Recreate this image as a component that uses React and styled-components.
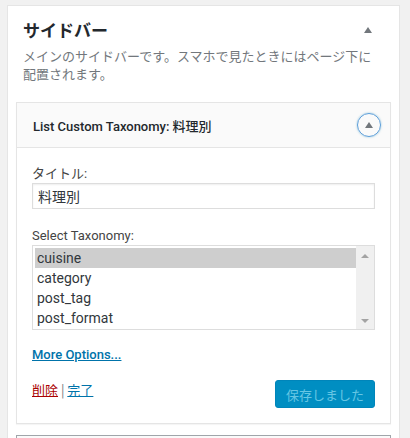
import React from "react";
import styled, { createGlobalStyle } from "styled-components";

const GlobalStyle = createGlobalStyle`
  html, body {
    margin: 0;
    padding: 0;
    background: #f1f1f1;
    overflow: hidden;
  }
  body {
    font-family: Roboto, "Noto Sans CJK JP", sans-serif;
    font-size: 13px;
    color: #444;
  }
`;

const Page = styled.div`
  padding: 5px 10px 0 7px;
  height: 438px;
  box-sizing: border-box;
`;

const Sidebar = styled.div`
  width: 393px;
  box-sizing: border-box;
  background: #fff;
  border: 1px solid #e5e5e5;
  padding: 0 8px;
  height: 460px;
`;

const SidebarHead = styled.div`
  display: flex;
  align-items: center;
  justify-content: space-between;
  padding: 7px 19px 0 7px;
  height: 34px;
  box-sizing: content-box;
`;

const SidebarTitle = styled.h2`
  margin: 0;
  font-family: "Noto Sans CJK JP", sans-serif;
  font-size: 17px;
  font-weight: 700;
  color: #23282d;
  line-height: 34px;
`;

const Arrow = styled.span`
  display: block;
  width: 0;
  height: 0;
  border-left: ${({ w }) => w}px solid transparent;
  border-right: ${({ w }) => w}px solid transparent;
  border-bottom: ${({ h }) => h}px solid ${({ color }) => color};
  ${({ down }) => down && "transform: rotate(180deg);"}
`;

const Description = styled.p`
  margin: 0 0 19px;
  padding: 0 10px 0 7px;
  font-family: "Noto Sans CJK JP", sans-serif;
  font-size: 13px;
  line-height: 18px;
  color: #72777c;
`;

const Widget = styled.div`
  border: 1px solid #e5e5e5;
  background: #fff;
  box-shadow: 0 1px 1px rgba(0, 0, 0, 0.04);
`;

const WidgetTop = styled.div`
  display: flex;
  align-items: center;
  justify-content: space-between;
  height: 44px;
  background: #fafafa;
  border-bottom: 1px solid #e5e5e5;
  padding: 0 9px 0 16px;
`;

const WidgetTitle = styled.h3`
  margin: 0;
  font-size: 13px;
  font-weight: 500;
  color: #23282d;
`;

const Toggle = styled.button`
  width: 24px;
  height: 24px;
  border-radius: 50%;
  border: 1px solid #5b9dd9;
  background: transparent;
  box-shadow: 0 0 2px rgba(30, 140, 190, 0.5);
  display: flex;
  align-items: center;
  justify-content: center;
  padding: 0 0 1px;
`;

const WidgetBody = styled.div`
  padding: 17px 15px 15px;
`;

const Label = styled.label`
  display: block;
  font-size: 13px;
  line-height: 18px;
  color: #444;
`;

const Input = styled.input`
  display: block;
  width: 100%;
  box-sizing: border-box;
  height: 26px;
  margin: 0 0 18px;
  padding: 2px 5px;
  border: 1px solid #ddd;
  box-shadow: inset 0 1px 2px rgba(0, 0, 0, 0.07);
  font-family: "Noto Sans CJK JP", sans-serif;
  font-size: 14px;
  color: #32373c;
  outline: none;
`;

const ListBox = styled.div`
  display: flex;
  height: 85px;
  box-sizing: border-box;
  border: 1px solid #ddd;
  background: #fff;
`;

const Options = styled.div`
  flex: 1;
  padding: 2px 0 0 2px;
`;

const Option = styled.div`
  height: 20px;
  line-height: 20px;
  padding: 0 2px;
  font-size: 14px;
  color: #32373c;
  background: ${({ selected }) => (selected ? "#cecece" : "transparent")};
`;

const ScrollTrack = styled.div`
  width: 18px;
  background: #f0f0f0;
  display: flex;
  flex-direction: column;
  align-items: center;
  justify-content: space-between;
  padding: 8px 0 6px;
`;

const MoreLink = styled.a`
  display: inline-block;
  margin-top: 16px;
  font-size: 13px;
  font-weight: 500;
  line-height: 18px;
  color: #0073aa;
  text-decoration: underline;
`;

const Actions = styled.div`
  display: flex;
  justify-content: space-between;
  align-items: flex-start;
  margin-top: 16px;
`;

const Links = styled.div`
  padding-top: 1px;
  font-family: "Noto Sans CJK JP", sans-serif;
  font-size: 13px;
  line-height: 18px;
  color: #72777c;
`;

const TextLink = styled.a`
  color: ${({ danger }) => (danger ? "#a00" : "#0073aa")};
  text-decoration: underline;
`;

const SaveButton = styled.button`
  width: 100px;
  height: 28px;
  border: 1px solid #0085ba;
  border-radius: 3px;
  background: #008ec2;
  color: #66c6e4;
  font-family: "Noto Sans CJK JP", sans-serif;
  font-size: 13px;
  padding: 0;
`;

const NextWidget = styled.div`
  margin-top: 11px;
  height: 40px;
  border: 1px solid #a0a5aa;
  background: #fafafa;
`;

const taxonomies = ["cuisine", "category", "post_tag", "post_format"];

const App = () => {
  return (
    <>
      <GlobalStyle />
      <Page>
        <Sidebar>
          <SidebarHead>
            <SidebarTitle>サイドバー</SidebarTitle>
            <Arrow w={4} h={6} color="#72777c" />
          </SidebarHead>
          <Description>
            メインのサイドバーです。スマホで見たときにはページ下に配置されます。
          </Description>
          <Widget>
            <WidgetTop>
              <WidgetTitle>List Custom Taxonomy: 料理別</WidgetTitle>
              <Toggle>
                <Arrow w={4} h={6} color="#72777c" />
              </Toggle>
            </WidgetTop>
            <WidgetBody>
              <Label>タイトル:</Label>
              <Input defaultValue="料理別" />
              <Label>Select Taxonomy:</Label>
              <ListBox>
                <Options>
                  {taxonomies.map((t, i) => (
                    <Option key={t} selected={i === 0}>
                      {t}
                    </Option>
                  ))}
                </Options>
                <ScrollTrack>
                  <Arrow w={4} h={4} color="#a3a3a3" />
                  <Arrow w={4} h={4} color="#a3a3a3" down />
                </ScrollTrack>
              </ListBox>
              <MoreLink href="#">More Options...</MoreLink>
              <Actions>
                <Links>
                  <TextLink danger href="#">削除</TextLink> | <TextLink href="#">完了</TextLink>
                </Links>
                <SaveButton>保存しました</SaveButton>
              </Actions>
            </WidgetBody>
          </Widget>
          <NextWidget />
        </Sidebar>
      </Page>
    </>
  );
};

export default App;
